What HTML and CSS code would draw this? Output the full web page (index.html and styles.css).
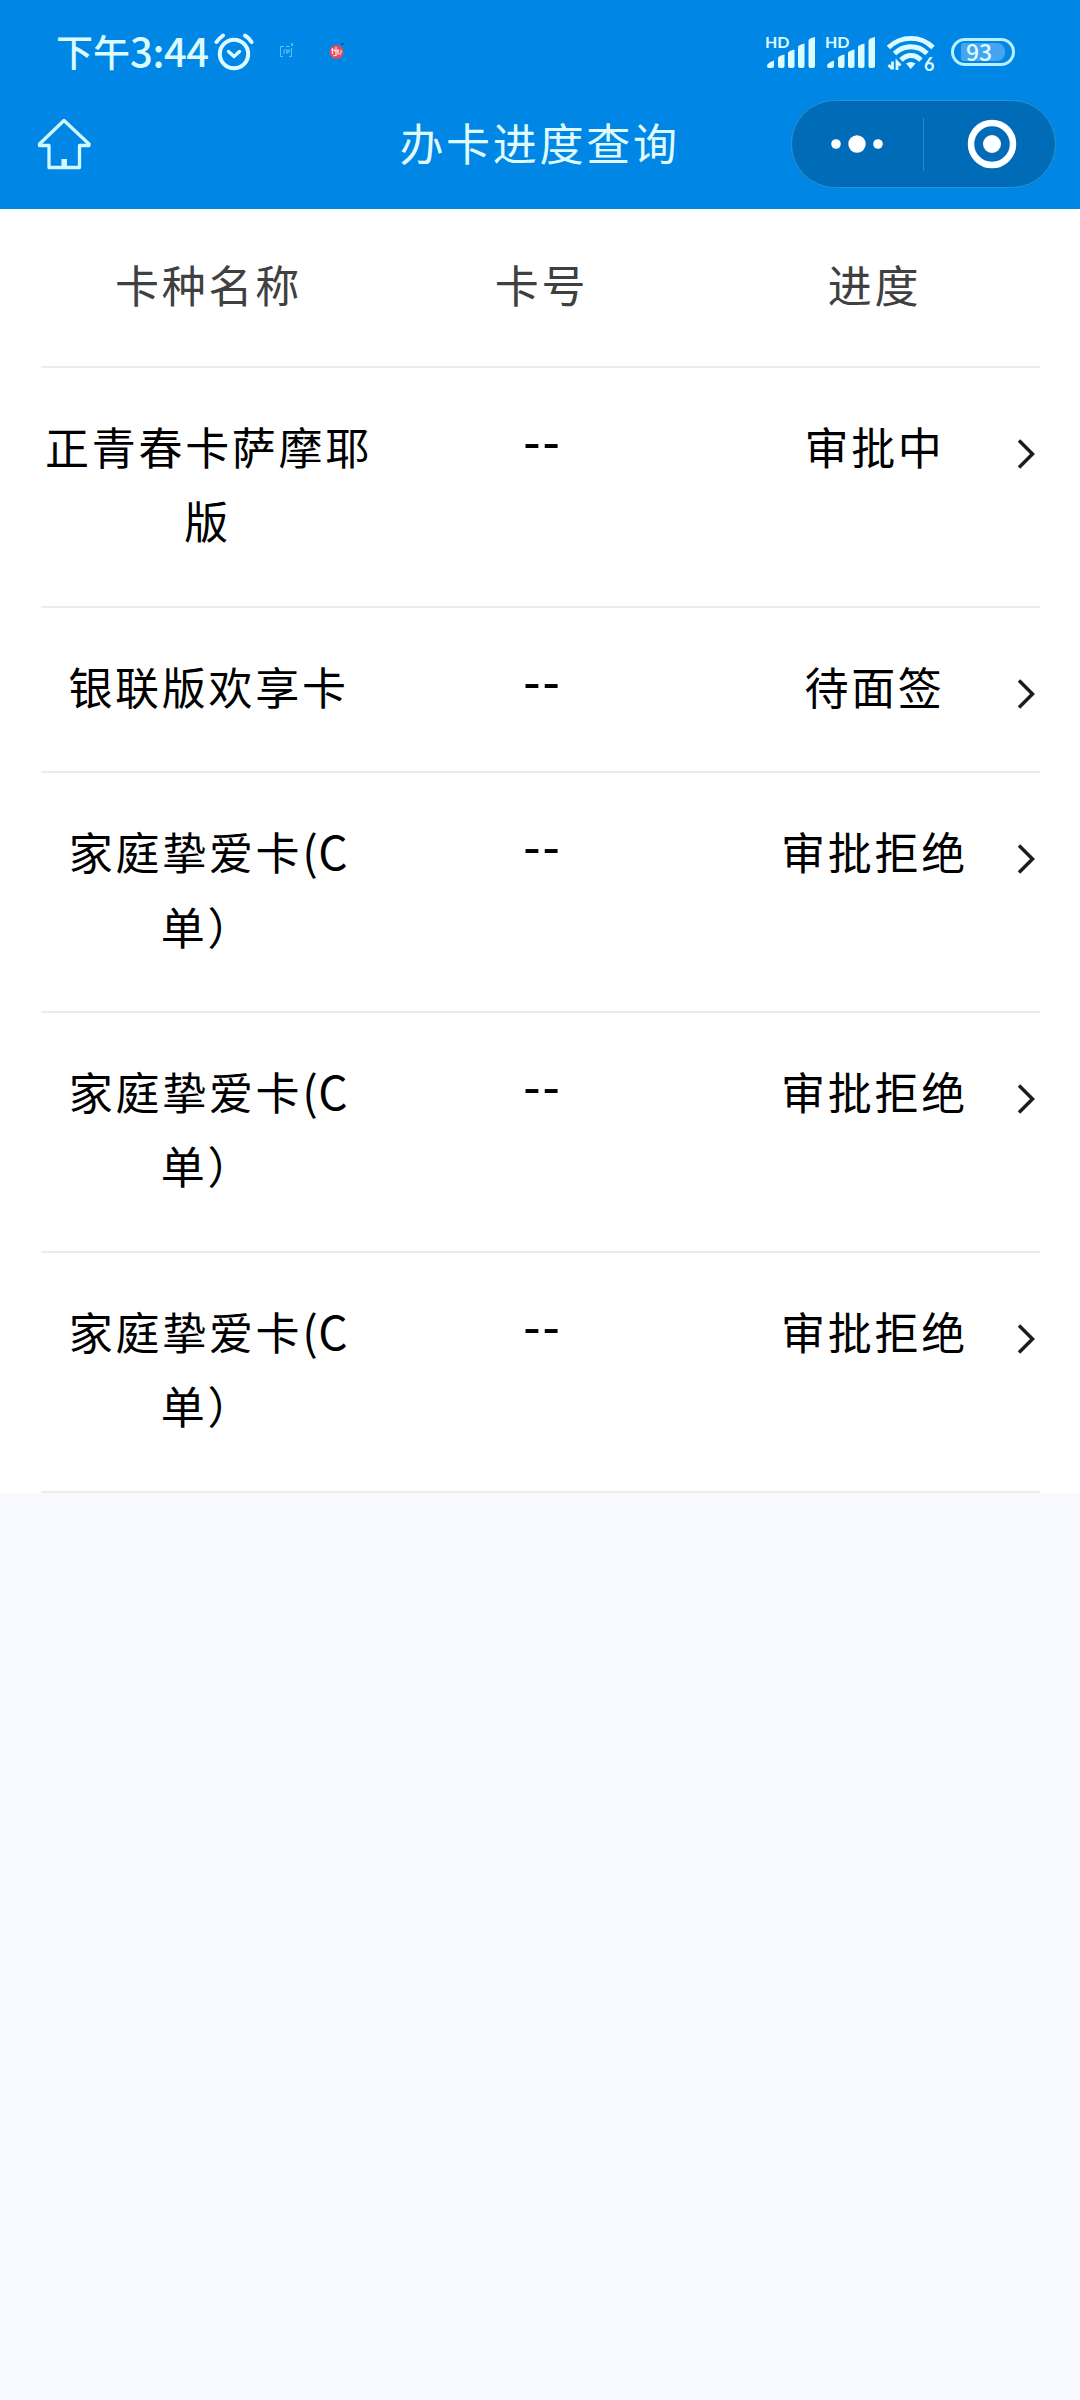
FILE: index.html
```html
<!DOCTYPE html>
<html lang="zh-CN">
<head>
<meta charset="utf-8">
<title>办卡进度查询</title>
<link rel="stylesheet" href="styles.css">
</head>
<body>
<header class="top">
  <div class="status">
    <div class="status-left">
      <span class="time"><span class="ampm">下午</span><span class="clock">3:44</span></span>
      <svg class="alarm" width="40" height="38" viewBox="0 0 40 38" fill="none" stroke="#dcfbff" stroke-linecap="round">
        <circle cx="20" cy="21" r="14.2" stroke-width="4"/>
        <path d="M14.500 18.500l5.500 5 5.500-5" stroke-width="3.4" stroke-linejoin="round"/>
        <path d="M2.500 9C4.500 6 7 4 9 2.500M31 2.500C33.500 4 35.500 6 37.500 9" stroke-width="4"/>
      </svg>
      <svg class="app app-a" width="14" height="15" viewBox="0 0 14 15" fill="none" stroke="#58c4f4" stroke-width="1">
        <path d="M4 3.500H.5v10H3M6 3.500h4M11.500 5v8.500H9M4 7v4M4 7h2M7 6v5M9 6v3M6 9h4"/>
        <path d="M12 0v3" stroke="#b5edff"/>
      </svg>
      <svg class="app app-b" width="16" height="18" viewBox="0 0 16 18">
        <circle cx="7.500" cy="10" r="7" fill="#e84a5c"/>
        <path d="M3.500 6v6M2 8h4M7 5v8M5 9h5M9 7v5h3M4 14l4-1M12 8v3" fill="none" stroke="#ffe3e6" stroke-width="1.200"/>
        <path d="M12.500 1h2v2h-2z" fill="#084f7c"/>
      </svg>
    </div>
    <div class="status-right">
      <div class="signal">
        <span class="hd">HD</span>
        <svg class="bars" width="52" height="34" viewBox="0 0 52 34" fill="#dcfbff">
          <path d="M2 31q0-3 7-5.500v5.500q0 2-2 2H4q-2 0-2-2zM13 23q0-2 6.500-3.500V31q0 2-2 2H15q-2 0-2-2zM23 18q0-2 6.500-3.500V31q0 2-2 2H25q-2 0-2-2zM33 12q0-2 6.500-3.500V31q0 2-2 2H35q-2 0-2-2zM43.500 6q0-3 6.500-4V31q0 2-2 2h-2.500q-2 0-2-2z"/>
        </svg>
      </div>
      <div class="signal">
        <span class="hd">HD</span>
        <svg class="bars" width="52" height="34" viewBox="0 0 52 34" fill="#dcfbff">
          <path d="M2 31q0-3 7-5.500v5.500q0 2-2 2H4q-2 0-2-2zM13 23q0-2 6.500-3.500V31q0 2-2 2H15q-2 0-2-2zM23 18q0-2 6.500-3.500V31q0 2-2 2H25q-2 0-2-2zM33 12q0-2 6.500-3.500V31q0 2-2 2H35q-2 0-2-2zM43.500 6q0-3 6.500-4V31q0 2-2 2h-2.500q-2 0-2-2z"/>
        </svg>
      </div>
      <div class="wifi">
        <svg width="48" height="36" viewBox="0 0 48 36" fill="none" stroke="#dcfbff" stroke-width="4.800">
          <path d="M1.500 12.500C14 .300 34 .300 46 12.500M7.500 18.500C17 9.500 31 9.500 40 18.500M14 25C20 19 28 19 34 25"/>
          <path d="M19 28.500q4.700-3 9.500 0L23.700 34z" fill="#dcfbff" stroke="none"/>
          <path d="M5.500 26.500v8M1.500 30l3.500 3.500M10 35v-8l3.500 3.500" stroke-width="2.800"/>
        </svg>
        <span class="six">6</span>
      </div>
      <div class="battery"><span class="battery-level">93</span></div>
    </div>
  </div>
  <nav class="nav">
    <svg class="home" width="54" height="52" viewBox="0 0 54 52" fill="none" stroke="#d2f9ff" stroke-width="3.300" stroke-linejoin="round" stroke-linecap="round">
      <path d="M27 2.500L2.500 26v1.500H12V49.500h30.500V27.500H52V26z"/>
      <path d="M27.200 41v8" stroke-width="5.500" stroke-linecap="butt"/>
    </svg>
    <h1 class="title">办卡进度查询</h1>
    <div class="capsule">
      <svg class="dots" width="52" height="18" viewBox="0 0 52 18" fill="#fff"><circle cx="5" cy="9" r="4.800"/><circle cx="26" cy="9" r="8.700"/><circle cx="47" cy="9" r="4.800"/></svg>
      <span class="split"></span>
      <svg class="target" width="50" height="50" viewBox="0 0 50 50"><circle cx="25" cy="25" r="21" fill="none" stroke="#fff" stroke-width="6.500"/><circle cx="25" cy="25" r="9" fill="#fff"/></svg>
    </div>
  </nav>
</header>
<main class="list">
  <div class="row head"><span>卡种名称</span><span>卡号</span><span>进度</span></div>
  <div class="row"><span>正青春卡萨摩耶版</span><span class="dash">--</span><span>审批中</span><svg class="arrow" viewBox="0 0 18 32"><path d="M2 2.500L15.500 16 2 29.500"/></svg></div>
  <div class="row"><span>银联版欢享卡</span><span class="dash">--</span><span>待面签</span><svg class="arrow" viewBox="0 0 18 32"><path d="M2 2.500L15.500 16 2 29.500"/></svg></div>
  <div class="row"><span>家庭挚爱卡<span class="latin">(C</span>单）</span><span class="dash">--</span><span>审批拒绝</span><svg class="arrow" viewBox="0 0 18 32"><path d="M2 2.500L15.500 16 2 29.500"/></svg></div>
  <div class="row"><span>家庭挚爱卡<span class="latin">(C</span>单）</span><span class="dash">--</span><span>审批拒绝</span><svg class="arrow" viewBox="0 0 18 32"><path d="M2 2.500L15.500 16 2 29.500"/></svg></div>
  <div class="row"><span>家庭挚爱卡<span class="latin">(C</span>单）</span><span class="dash">--</span><span>审批拒绝</span><svg class="arrow" viewBox="0 0 18 32"><path d="M2 2.500L15.500 16 2 29.500"/></svg></div>
</main>
</body>
</html>
```
FILE: styles.css
```css
* { box-sizing: border-box; }
body {
  margin: 0;
  min-height: 2400px;
  background: #f8faff;
  color: #000;
  font-family: "Noto Sans CJK SC", sans-serif;
}
svg { display: block; flex: none; }

.top { height: 209px; background: #0087e6; color: #dcfbff; }
.status {
  height: 100px;
  padding: 0 65px 0 56px;
  display: flex;
  justify-content: space-between;
}
.status-left, .status-right { display: flex; align-items: flex-start; }
.time { display: flex; height: 104px; line-height: 102px; font-size: 37px; font-weight: 500; white-space: nowrap; }
.ampm { width: 74px; }
.clock { width: 78px; font-family: "Noto Sans CJK SC", sans-serif; font-size: 40px; line-height: 101px; letter-spacing: -0.4px; }
.alarm { margin: 33px 0 0 6px; }
.app-a { margin: 43px 0 0 26px; }
.app-b { margin: 42px 0 0 35px; }
.signal { position: relative; width: 52px; height: 34px; margin: 35px 8px 0 0; }
.hd {
  position: absolute;
  left: 0;
  top: -3px;
  font: 700 16px/20px Lato, sans-serif;
}
.wifi { position: relative; margin: 35px 16px 0 2px; }
.six {
  position: absolute;
  left: 37px;
  top: 18px;
  font: 700 18px/22px Lato, sans-serif;
}
.battery {
  width: 64px;
  height: 28px;
  margin-top: 38px;
  padding: 2px 7px;
  border: 3px solid #b9f0ff;
  border-radius: 14px;
}
.battery-level {
  display: block;
  height: 18px;
  padding-left: 5px;
  border-radius: 3px 8px 8px 3px;
  background: #45a5f1;
  font: 500 23px/17px "Noto Sans CJK SC", sans-serif;
}

.nav {
  height: 88px;
  padding: 0 24px 0 37px;
  display: grid;
  grid-template-columns: 265px 1fr 265px;
  align-items: center;
}
.title {
  margin: 0 14px 0 0;
  justify-self: center;
  color: #dffbff;
  font-size: 44px;
  font-weight: 400;
  line-height: 84px;
  height: 88px;
  letter-spacing: 2.7px;
  white-space: nowrap;
}
.capsule {
  height: 88px;
  display: flex;
  align-items: center;
  padding-left: 39px;
  border: 1px solid #308fcf;
  border-radius: 44px;
  background: #006bb6;
}
.split { width: 1px; height: 53px; margin: 0 43px 0 40px; background: #3387c4; }

.list { padding: 0 40px 0 41px; background: #fff; }
.row {
  position: relative;
  display: grid;
  grid-template-columns: repeat(3, 1fr);
  padding: 41px 0 48px;
  border-bottom: 2px solid #ececec;
  font-size: 44px;
  line-height: 74.400px;
  letter-spacing: 2.700px;
  text-indent: 2px;
  text-align: center;
}
.head { height: 159px; padding-top: 38px; color: #404040; }
.latin { font-size: 46px; line-height: 1; letter-spacing: 0.5px; }
.dash {
  font-family: Lato, "Noto Sans CJK SC", sans-serif;
  font-size: 52px;
  letter-spacing: 0;
  line-height: 66px;
}
.arrow {
  position: absolute;
  right: 5px;
  top: 70px;
  width: 18px;
  height: 32px;
  fill: none;
  stroke: #1c1c1c;
  stroke-width: 3.500;
}
```
